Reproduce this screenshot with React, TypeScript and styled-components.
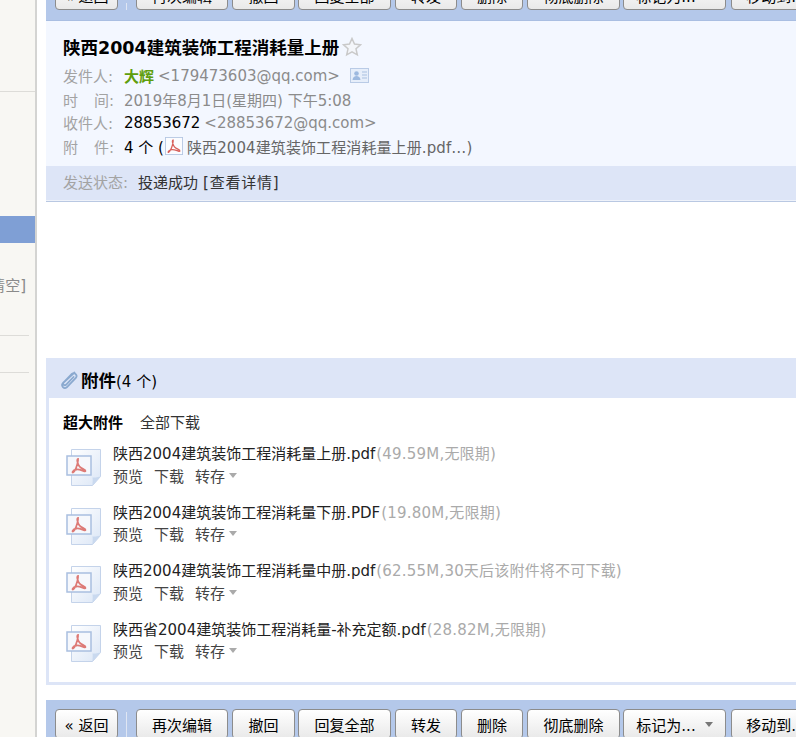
import React from 'react'
import styled, { createGlobalStyle } from 'styled-components'

const GlobalStyle = createGlobalStyle`
  html, body {
    margin: 0;
    padding: 0;
    background: #fff;
    overflow: hidden;
  }
  body {
    font-family: "DejaVu Sans", "Noto Sans CJK SC", sans-serif;
    font-size: 15px;
    color: #000;
  }
`

const Page = styled.div`
  display: flex;
  width: 796px;
  height: 737px;
  overflow: hidden;
`

const Sidebar = styled.div`
  flex: none;
  display: flex;
  flex-direction: column;
  box-sizing: content-box;
  width: 35px;
  background: #f8f7f3;
  border-right: 2px solid #d4d4d2;
`

const SideRule = styled.div<{ $top: number; $short?: boolean }>`
  flex: none;
  height: 1px;
  margin-top: ${({ $top }) => $top}px;
  margin-right: ${({ $short }) => ($short ? 6 : 0)}px;
  background: #dddcd8;
`

const SideActive = styled.div`
  flex: none;
  height: 27px;
  margin-top: 124px;
  background: #7f9fd5;
`

const SideClear = styled.div`
  flex: none;
  display: flex;
  justify-content: flex-end;
  height: 22px;
  margin-top: 32px;
  padding-right: 9px;
  overflow: hidden;
  line-height: 22px;
  white-space: nowrap;
  color: #8a8a8a;
`

const Main = styled.div`
  flex: 1;
  min-width: 0;
  margin-left: 9px;
  overflow: hidden;
`

const Toolbar = styled.div<{ $clipped?: boolean }>`
  display: flex;
  box-sizing: border-box;
  align-items: ${({ $clipped }) => ($clipped ? 'flex-end' : 'flex-start')};
  height: ${({ $clipped }) => ($clipped ? '21px' : '37px')};
  padding: ${({ $clipped }) => ($clipped ? '0 0 10px 9px' : '9px 0 0 9px')};
  background: #b4c8ea;
  border-bottom: ${({ $clipped }) => ($clipped ? '1px solid #a9bee2' : '0')};
`

const ToolButton = styled.div<{ $width: number; $gap?: number }>`
  flex: none;
  display: flex;
  align-items: center;
  justify-content: center;
  gap: 9px;
  box-sizing: border-box;
  width: ${({ $width }) => $width}px;
  height: 30px;
  margin-right: ${({ $gap }) => $gap ?? 4}px;
  border: 1px solid #8c8c8c;
  border-radius: 4px;
  background: linear-gradient(#ffffff, #e9e9e9);
  white-space: nowrap;
`

const ToolDivider = styled.div`
  flex: none;
  align-self: stretch;
  width: 1px;
  margin: 3px 9px 0 0;
  background: #dfe6f3;
`

const Caret = styled.span<{ $color?: string }>`
  display: inline-block;
  width: 0;
  height: 0;
  border-style: solid;
  border-width: 5px 4.5px 0;
  border-color: ${({ $color }) => $color ?? '#777'} transparent transparent;
`

const Header = styled.div`
  height: 145px;
  box-sizing: border-box;
  padding: 13px 0 0 17px;
  background: #f3f7ff;
`

const Subject = styled.div`
  display: flex;
  align-items: center;
  gap: 3px;
  height: 25px;
  margin-bottom: 5px;
  font-size: 17.5px;
  font-weight: bold;
`

const MetaRow = styled.div`
  display: flex;
  align-items: center;
  height: 23.5px;
  white-space: nowrap;
`

const MetaLabel = styled.span`
  flex: none;
  width: 61px;
  color: #a3a3a3;
`

const SpacedLabel = styled(MetaLabel)`
  display: inline-flex;
  gap: 16px;
`

const Sender = styled.span`
  font-weight: bold;
  color: #5f9e0c;
  margin-right: 4px;
`

const Grey = styled.span`
  color: #8b8b8b;
`

const Address = styled(Grey)`
  margin-left: 4px;
`

const AttachHint = styled.span`
  color: #666;
  letter-spacing: 0.1px;
`

const CardIconBox = styled.span`
  display: inline-flex;
  margin-left: 10px;
`

const MiniIconBox = styled.span`
  display: inline-flex;
  margin: 0 4px 0 1px;
`

const StatusBar = styled.div`
  display: flex;
  align-items: center;
  height: 34px;
  box-sizing: border-box;
  padding: 0 0 3px 17px;
  background: #dde5f7;
  color: #333;
`

const StatusLabel = styled.span`
  width: 75px;
  color: #a3a3a3;
`

const DetailLink = styled.span`
  margin-left: 5px;
  letter-spacing: 0.8px;
`

const BodyRule = styled.div`
  height: 2px;
  background: #b9c8e2;
  border-top: 1px solid #eef2fa;
  box-sizing: border-box;
`

const Body = styled.div`
  height: 156px;
`

const AttachPanel = styled.div`
  box-sizing: border-box;
  height: 327px;
  border: solid #dde5f7;
  border-width: 0 0 3px 3px;
`

const AttachHead = styled.div`
  display: flex;
  align-items: center;
  gap: 3px;
  box-sizing: border-box;
  height: 40px;
  margin-left: -3px;
  padding: 3px 0 0 14px;
  background: #dde5f7;
`

const AttachTitle = styled.span`
  font-size: 17.5px;
  font-weight: bold;
`

const AttachList = styled.div`
  padding: 14px 0 0 14px;
`

const BigLinks = styled.div`
  display: flex;
  gap: 17px;
  height: 22px;
  line-height: 22px;
  margin-bottom: 13px;
  color: #333;
`

const Bold = styled.span`
  font-weight: bold;
  color: #000;
`

const FileRow = styled.div`
  display: flex;
  gap: 10px;
  height: 58.5px;
`

const FileIconBox = styled.div`
  flex: none;
  width: 37px;
  padding-top: 1px;
  margin-left: 3px;
`

const FileInfo = styled.div`
  display: flex;
  flex-direction: column;
  white-space: nowrap;
`

const FileName = styled.div`
  height: 22px;
  margin-top: -4px;
  line-height: 22px;
  color: #222;
`

const FileMeta = styled.span`
  margin-left: 1px;
  color: #aaa;
  letter-spacing: 0.2px;
`

const FileActions = styled.div`
  display: flex;
  align-items: center;
  gap: 11px;
  height: 22px;
  margin-top: -1px;
  color: #444;
`

const SaveAction = styled.span`
  display: inline-flex;
  align-items: center;
  gap: 4px;
`

const Spacer = styled.div`
  height: 15px;
`

const Star = () => (
  <svg width="20" height="20" viewBox="0 0 20 20">
    <path
      d="M10 1.5l2.5 5.6 6 .7-4.5 4 1.3 6L10 14.8l-5.3 3 1.3-6-4.5-4 6-.7z"
      fill="#f4f6fa"
      stroke="#c9c9c9"
      strokeWidth="1.5"
    />
  </svg>
)

const CardIcon = () => (
  <svg width="19" height="15" viewBox="0 0 19 15">
    <rect x="0.5" y="0.5" width="18" height="14" fill="#e6eefa" stroke="#b9cbe6" />
    <circle cx="6.5" cy="5.5" r="2.3" fill="#9db9df" />
    <path d="M2.5 12c.4-3 2-4 4-4s3.600 1 4 4z" fill="#9db9df" />
    <path d="M12 4h5M12 7h5M12 10h5" stroke="#a9c0e0" strokeWidth="1" />
  </svg>
)

const Swirl = 'M9 3.500c-1.500 0-.5 5 1.500 7.500s6.500 3 6 4.500-5-2-9-1.500-4.500 3.500-3.500 3c2-1 4.500-7 5-12z'

const PdfMini = () => (
  <svg width="18" height="18" viewBox="0 0 20 20">
    <rect x="0.5" y="0.5" width="19" height="19" fill="#fbfcff" stroke="#b5c7e3" />
    <path d={Swirl} fill="none" stroke="#d8615c" strokeWidth="1.500" />
  </svg>
)

const PdfLarge = () => (
  <svg width="37" height="40" viewBox="0 0 37 40">
    <defs>
      <linearGradient id="sheet" x1="0" y1="0" x2="1" y2="1">
        <stop offset="0" stopColor="#ffffff" />
        <stop offset="1" stopColor="#dbe6f6" />
      </linearGradient>
    </defs>
    <path
      d="M5.500 1.500h29v27l-8 9h-21z"
      fill="url(#sheet)"
      stroke="#c4d3ea"
    />
    <path d="M34.500 28.500c-3 1-7 1-8 1 .5 2 0 6 0 8z" fill="#c9d9ef" />
    <rect x="1" y="8" width="24" height="19" fill="#f6f8fc" stroke="#a9bfe0" strokeWidth="1.500" />
    <g transform="translate(3 7.500)">
      <path d={Swirl} fill="none" stroke="#dd7a76" strokeWidth="1.800" />
    </g>
  </svg>
)

const Clip = () => (
  <svg width="18" height="20" viewBox="0 0 18 20">
    <path
      d="M14.500 2.500 3 13c-2.500 2.800 1 6.500 3.800 4.300l9-9.300c2.200-2.700-1.300-6.300-4-4L3.500 12.500c-1.300 1.800 1 3.500 2.500 2.300l7.500-7.800"
      fill="none"
      stroke="#8aa9cf"
      strokeWidth="1.800"
      strokeLinecap="round"
    />
  </svg>
)

const buttons = [
  { label: '再次编辑', width: 92 },
  { label: '撤回', width: 63, gap: 3 },
  { label: '回复全部', width: 93 },
  { label: '转发', width: 62 },
  { label: '删除', width: 62 },
  { label: '彻底删除', width: 93, gap: 3 },
  { label: '标记为...', width: 103, gap: 5, caret: true },
  { label: '移动到...', width: 90 }
]

const files = [
  { name: '陕西2004建筑装饰工程消耗量上册.pdf', meta: '(49.59M,无限期)' },
  { name: '陕西2004建筑装饰工程消耗量下册.PDF', meta: '(19.80M,无限期)' },
  { name: '陕西2004建筑装饰工程消耗量中册.pdf', meta: '(62.55M,30天后该附件将不可下载)' },
  { name: '陕西省2004建筑装饰工程消耗量-补充定额.pdf', meta: '(28.82M,无限期)' }
]

const ToolbarItems = () => (
  <>
    <ToolButton $width={63} $gap={8}>« 返回</ToolButton>
    <ToolDivider />
    {buttons.map(b => (
      <ToolButton key={b.label} $width={b.width} $gap={b.gap}>
        {b.label}
        {b.caret && <Caret />}
      </ToolButton>
    ))}
  </>
)

const App: React.FC = () => (
  <>
    <GlobalStyle />
    <Page>
      <Sidebar>
        <SideRule $top={91} />
        <SideActive />
        <SideClear>[清空]</SideClear>
        <SideRule $top={38} $short />
        <SideRule $top={36} $short />
      </Sidebar>
      <Main>
        <Toolbar $clipped>
          <ToolbarItems />
        </Toolbar>
        <Header>
          <Subject>
            陕西2004建筑装饰工程消耗量上册
            <Star />
          </Subject>
          <MetaRow>
            <MetaLabel>发件人:</MetaLabel>
            <Sender>大辉</Sender>
            <Grey>&lt;179473603@qq.com&gt;</Grey>
            <CardIconBox>
              <CardIcon />
            </CardIconBox>
          </MetaRow>
          <MetaRow>
            <SpacedLabel>
              <span>时</span>
              <span>间:</span>
            </SpacedLabel>
            <Grey>2019年8月1日(星期四) 下午5:08</Grey>
          </MetaRow>
          <MetaRow>
            <MetaLabel>收件人:</MetaLabel>
            <span>28853672</span>
            <Address>&lt;28853672@qq.com&gt;</Address>
          </MetaRow>
          <MetaRow>
            <SpacedLabel>
              <span>附</span>
              <span>件:</span>
            </SpacedLabel>
            <span>4 个 (</span>
            <MiniIconBox>
              <PdfMini />
            </MiniIconBox>
            <AttachHint>陕西2004建筑装饰工程消耗量上册.pdf…)</AttachHint>
          </MetaRow>
        </Header>
        <StatusBar>
          <StatusLabel>发送状态:</StatusLabel>
          投递成功
          <DetailLink>[查看详情]</DetailLink>
        </StatusBar>
        <BodyRule />
        <Body />
        <AttachPanel>
          <AttachHead>
            <Clip />
            <span>
              <AttachTitle>附件</AttachTitle>(4 个)
            </span>
          </AttachHead>
          <AttachList>
            <BigLinks>
              <Bold>超大附件</Bold>
              <span>全部下载</span>
            </BigLinks>
            {files.map(f => (
              <FileRow key={f.name}>
                <FileIconBox>
                  <PdfLarge />
                </FileIconBox>
                <FileInfo>
                  <FileName>
                    {f.name}
                    <FileMeta>{f.meta}</FileMeta>
                  </FileName>
                  <FileActions>
                    <span>预览</span>
                    <span>下载</span>
                    <SaveAction>
                      转存
                      <Caret $color="#aaa" />
                    </SaveAction>
                  </FileActions>
                </FileInfo>
              </FileRow>
            ))}
          </AttachList>
        </AttachPanel>
        <Spacer />
        <Toolbar>
          <ToolbarItems />
        </Toolbar>
      </Main>
    </Page>
  </>
)

export default App
